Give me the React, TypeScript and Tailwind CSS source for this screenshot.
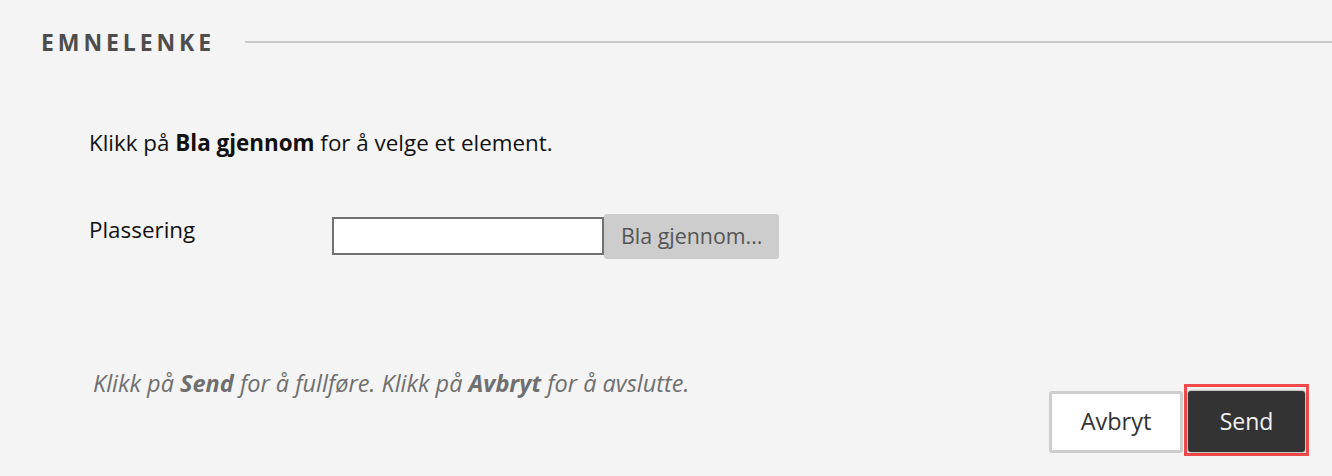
export default function App() {
  return (
    <div
      className="w-[1332px] h-[476px] bg-[#f4f4f4] overflow-hidden"
      style={{ fontFamily: '"Open Sans", "Liberation Sans", sans-serif' }}
    >
      {/* Section heading */}
      <div className="flex items-center pl-[41px] pt-[26px]">
        <h2 className="text-[23px] leading-[32px] font-bold tracking-[0.17em] text-[#4d4d4d]">
          EMNELENKE
        </h2>
        <div className="flex-1 h-[2px] bg-[#c8c8c8] ml-[30px]" />
      </div>

      <div className="pl-[89px] pt-[69px]">
        <p className="text-[22.4px] leading-[32px] text-[#111]">
          Klikk på <b className="font-bold">Bla gjennom</b> for å velge et element.
        </p>

        <div className="flex items-start mt-[55px]">
          <label className="w-[243px] text-[22.4px] leading-[32px] text-[#111]">Plassering</label>
          <div className="flex items-start">
            <input
              type="text"
              className="w-[272px] h-[38px] mt-[3px] bg-white border-2 border-[#707070] outline-none"
            />
            <button className="h-[45px] px-[17px] bg-[#cdcdcd] rounded-[3px] text-[21.4px] text-[#555]">
              Bla gjennom...
            </button>
          </div>
        </div>
      </div>

      {/* Footer */}
      <div className="flex items-start justify-between pl-[93px] pr-[23px] mt-[108px]">
        <p className="italic text-[23.5px] leading-[32px] text-[#6f6f6f]">
          Klikk på <b className="font-bold">Send</b> for å fullføre. Klikk på{' '}
          <b className="font-bold">Avbryt</b> for å avslutte.
        </p>
        <div className="flex items-start mt-[17px]">
          <button className="mt-[7px] w-[134px] h-[62px] bg-white border-[3px] border-[#cdcdcd] rounded-[3px] text-[23.5px] text-[#333]">
            Avbryt
          </button>
          <div className="ml-[1px] border-[3px] border-[#f24a4a] pt-[4px] px-[1px] pb-[1px]">
            <button className="w-[117px] h-[61px] bg-[#333] rounded-[3px] text-[23px] text-[#f2f2f2] shadow-[0_0_3px_rgba(0,0,0,0.5)]">
              Send
            </button>
          </div>
        </div>
      </div>
    </div>
  );
}
